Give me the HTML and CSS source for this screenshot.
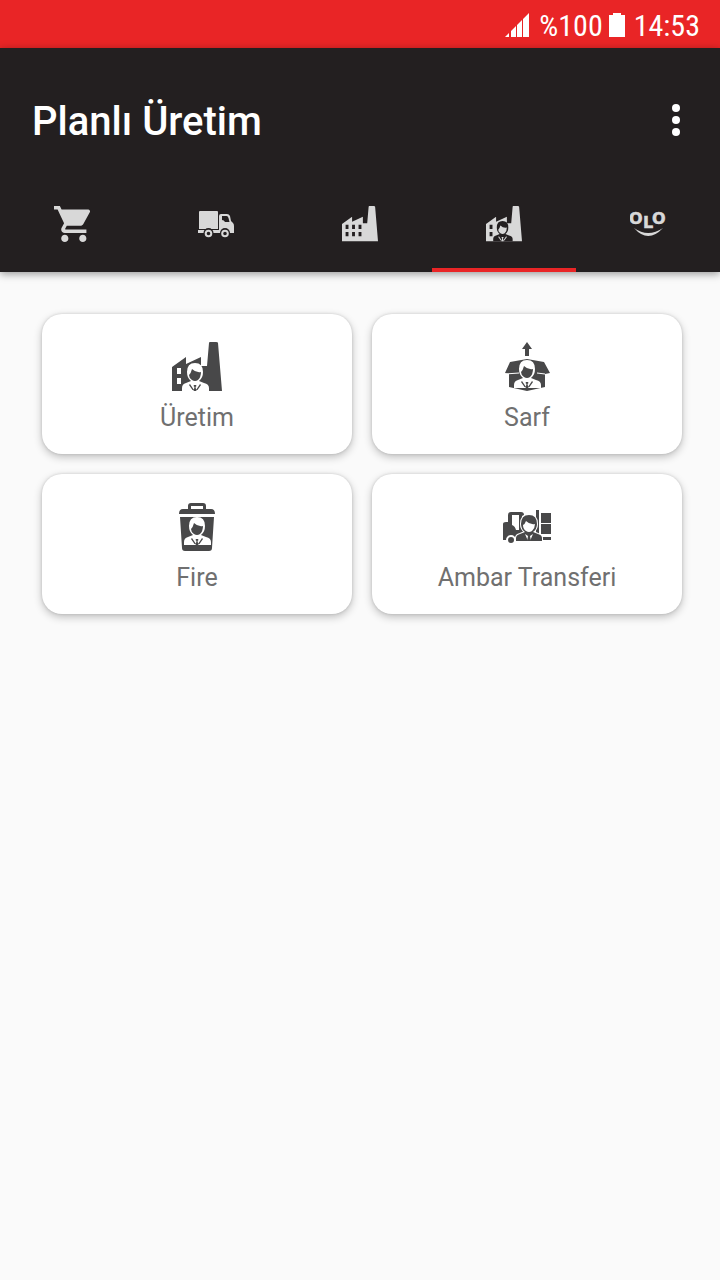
FILE: index.html
```
<!DOCTYPE html>
<html lang="tr">
<head>
<meta charset="utf-8">
<meta name="viewport" content="width=device-width, initial-scale=1">
<title>Planlı Üretim</title>
<link rel="stylesheet" href="styles.css">
</head>
<body>
<!-- shared shapes -->
<svg class="defs" width="0" height="0" aria-hidden="true">
	<symbol id="person" viewBox="0 0 50 50">
		<path class="skin" d="M10 49V46Q10 42 14 41L19 39Q15 36 15 30Q15 21 23 21Q31 21 31 30Q31 36 27 39L32 41Q37 42 37 46V49Z"/>
		<path class="mark" d="M17 33Q19 31 20 27Q24 31 29 30Q29 35 26 38Q23 40 20 38Q17 36 17 33Z"/>
		<path class="mark" d="M18 42L22 48H20.500L17 43ZM28 42L24 48H25.500L29 43ZM22 43H24L24.500 44L23.500 45L24.500 49H21.500L22.500 45L21.500 44Z"/>
	</symbol>
	<symbol id="factory" viewBox="0 0 50 50">
		<path d="M0 25L14 15V22L29 15V24H35L37 1Q37 0 38 0H44Q46 0 46 1L50 49H0Z"/>
	</symbol>
</svg>

<div class="status">
	<svg class="signal" viewBox="0 0 26 26" aria-hidden="true"><path d="M0 25L4 21V25ZM6 19L11 14V25H6ZM12 13L17 8V25H12ZM18 7L24 1V25H18Z"/></svg>
	<span>%100</span>
	<svg class="battery" viewBox="0 0 16 24" aria-hidden="true"><path d="M4 0H12V2H16V24H0V2H4Z"/></svg>
	<span>14:53</span>
</div>

<header class="appbar">
	<div class="toolbar">
		<h1>Planlı Üretim</h1>
		<button class="more" aria-label="Menü">
			<svg viewBox="0 0 8 32"><circle cx="4" cy="4" r="4"/><circle cx="4" cy="16" r="4"/><circle cx="4" cy="28" r="4"/></svg>
		</button>
	</div>
	<nav class="tabs">
		<button class="tab" aria-label="Sipariş">
			<svg viewBox="1 2 20 20"><path d="M7 18c-1.1 0-1.99.9-1.99 2S5.9 22 7 22s2-.9 2-2-.9-2-2-2zM1 2v2h2l3.6 7.59-1.35 2.45c-.16.28-.25.61-.25.96 0 1.1.9 2 2 2h12v-2H7.42c-.14 0-.25-.11-.25-.25l.03-.12.9-1.63h7.45c.75 0 1.41-.41 1.75-1.03l3.58-6.49A1 1 0 0 0 20 4H5.21l-.94-2H1zm16 16c-1.1 0-1.99.9-1.99 2s.89 2 1.99 2 2-.9 2-2-.9-2-2-2z"/></svg>
		</button>
		<button class="tab" aria-label="Sevkiyat">
			<svg viewBox="0 0 36 36">
				<path d="M2 5H19Q20 5 20 6V23H1V6Q1 5 2 5ZM0 24H21V10Q21 8 23 8H29Q31 8 32 10L33 15L35 17Q36 18 36 20V27H0Z"/>
				<path class="hole" d="M24 10H28.500Q30 10 30.500 12L31.500 16H27Q26 14 24 14Z"/>
				<circle class="hole" cx="10.500" cy="27" r="5"/><circle class="hole" cx="27" cy="27" r="5"/>
				<circle class="wheel" cx="10.500" cy="27.500" r="2.800"/><circle class="wheel" cx="27" cy="27.500" r="2.800"/>
			</svg>
		</button>
		<button class="tab" aria-label="Üretim">
			<svg viewBox="0 0 50 50">
				<use href="#factory"/>
				<path class="hole" d="M5 26H9V32H5ZM14 26H18V32H14ZM23 26H27V32H23ZM5 36H9V42H5ZM14 36H18V42H14ZM23 36H27V42H23Z"/>
			</svg>
		</button>
		<button class="tab active" aria-label="Planlı Üretim">
			<svg viewBox="0 0 50 50">
				<use href="#factory"/>
				<path class="hole" d="M5 26H9V32H5ZM5 36H9V42H5Z"/>
				<use class="man dark" href="#person"/>
			</svg>
		</button>
		<button class="tab" aria-label="Olo">
			<svg viewBox="0 0 36 36">
				<text class="logo" x="-1" y="18">O<tspan x="13" dy="4">L</tspan><tspan x="22" dy="-4">O</tspan></text>
				<path d="M4 22Q18 38 33 22Q18 32 4 22Z"/>
			</svg>
		</button>
	</nav>
</header>

<main class="grid">
	<button class="card">
		<svg viewBox="0 0 50 50">
			<use href="#factory"/>
			<path class="hole" d="M5 26H9V32H5ZM5 36H9V42H5Z"/>
			<use class="man" href="#person"/>
		</svg>
		<span>Üretim</span>
	</button>
	<button class="card">
		<svg viewBox="0 0 50 50">
			<path d="M25 0L30 7H27V14H23V7H20ZM8 20L25 17L42 20L48 31L43 32V45L25 49L7 45V32L3 31Z"/>
			<path class="crease" d="M3 32L17 31M35 31L43 32"/>
			<use class="man" href="#person" x="2" y="-3"/>
		</svg>
		<span>Sarf</span>
	</button>
	<button class="card">
		<svg viewBox="0 0 50 50">
			<path d="M7 12Q7 7 11 7H16V4Q16 1 19 1H31Q34 1 34 4V7H39Q43 7 43 12ZM19 4V7H31V4ZM8 15H42L40 46Q40 49 37 49H13Q10 49 10 46Z" fill-rule="evenodd"/>
			<use class="man" href="#person" x="2" y="-6"/>
		</svg>
		<span>Fire</span>
	</button>
	<button class="card">
		<svg viewBox="0 0 50 50">
			<path d="M1 22Q1 20 4 20H6V13Q6 10 9 10H19Q22 10 22 13L20 14V26H30V38H1ZM10 13V23Q13 24 14 28H17V13ZM34 8H37V36H34ZM39 11H49V21H39ZM39 22H49V32H39ZM38 35H49V38H38Z" fill-rule="evenodd"/>
			<circle class="rim" cx="9" cy="38" r="4"/>
			<path class="outline" d="M14 39V36Q14 33 18 32L23 30Q19 27 19 22Q19 13 27 13Q35 13 35 22Q35 27 31 30L36 32Q40 33 40 36V39Z"/>
			<path class="hole" d="M21 23Q23 22 24 19Q28 23 33 22Q33 26 30 29Q27 31 24 29Q21 27 21 23ZM23 32L26 39H28L31 32L28 34H26Z"/>
			<path d="M26 34H28L29 39H25Z"/>
		</svg>
		<span>Ambar Transferi</span>
	</button>
</main>
</body>
</html>
```
FILE: styles.css
```
*{ margin:0; padding:0; box-sizing:border-box;}
body{ background:#fafafa; font-family:Roboto,"Noto Sans",sans-serif; color:#707070;}
button{ border:0; background:none; font:inherit; color:inherit; cursor:pointer;}
svg{ display:block; fill:currentColor;}
.defs{ position:absolute;}

.status{ display:flex; align-items:center; justify-content:flex-end; height:48px; padding:2px 20px 0 0; background:#e92526; color:#fff; font-family:"Roboto Condensed",Roboto,sans-serif; font-size:30px;}
.signal{ width:26px; height:26px; margin-right:8px;}
.battery{ width:16px; height:24px; margin:0 9px 0 6px;}

.appbar{ position:relative; background:#231f20; color:#fff; box-shadow:0 2px 8px rgba(0,0,0,.4);}
.toolbar{ display:flex; align-items:center; justify-content:space-between; height:128px; padding:16px 20px 0 32px;}
.toolbar h1{ padding-top:4px; font-size:40px; font-weight:500; line-height:48px;}
.more{ padding:8px 20px;}
.more svg{ width:8px; height:32px;}
.tabs{ display:flex; height:96px;}
.tab{ flex:1; display:flex; align-items:center; justify-content:center; color:#d8d8d8; border-bottom:4px solid transparent; border-top:4px solid transparent;}
.tab svg{ width:36px; height:36px;}
.tab.active{ border-bottom-color:#e92526;}
.tab .hole{ fill:#231f20;}
.wheel{ fill:none; stroke:currentColor; stroke-width:2;}
.logo{ font:bold 16px "DejaVu Sans",sans-serif; stroke:currentColor; stroke-width:.5;}

.grid{ display:grid; grid-template-columns:1fr 1fr; gap:20px; padding:42px 38px 42px 42px;}
.card{ display:flex; flex-direction:column; align-items:center; height:140px; padding-top:28px; background:#fff; border-radius:20px; box-shadow:0 3px 8px rgba(0,0,0,.24),0 0 3px rgba(0,0,0,.14);}
.card svg{ width:50px; height:50px; color:#484849;}
.card span{ margin-top:10px; font-size:25px; line-height:32px;}
.hole{ fill:#fff;}
.crease{ fill:none; stroke:#fff; stroke-width:1;}
.rim{ stroke:#fff; stroke-width:2;}
.outline{ stroke:#fff; stroke-width:2; paint-order:stroke;}

/* person: skin is the silhouette, mark is the face and collar */
.man{ --skin:#fff; --mark:#484849;}
.man.dark{ --skin:#231f20; --mark:#d8d8d8;}
.skin{ fill:var(--skin);}
.mark{ fill:var(--mark);}
```
